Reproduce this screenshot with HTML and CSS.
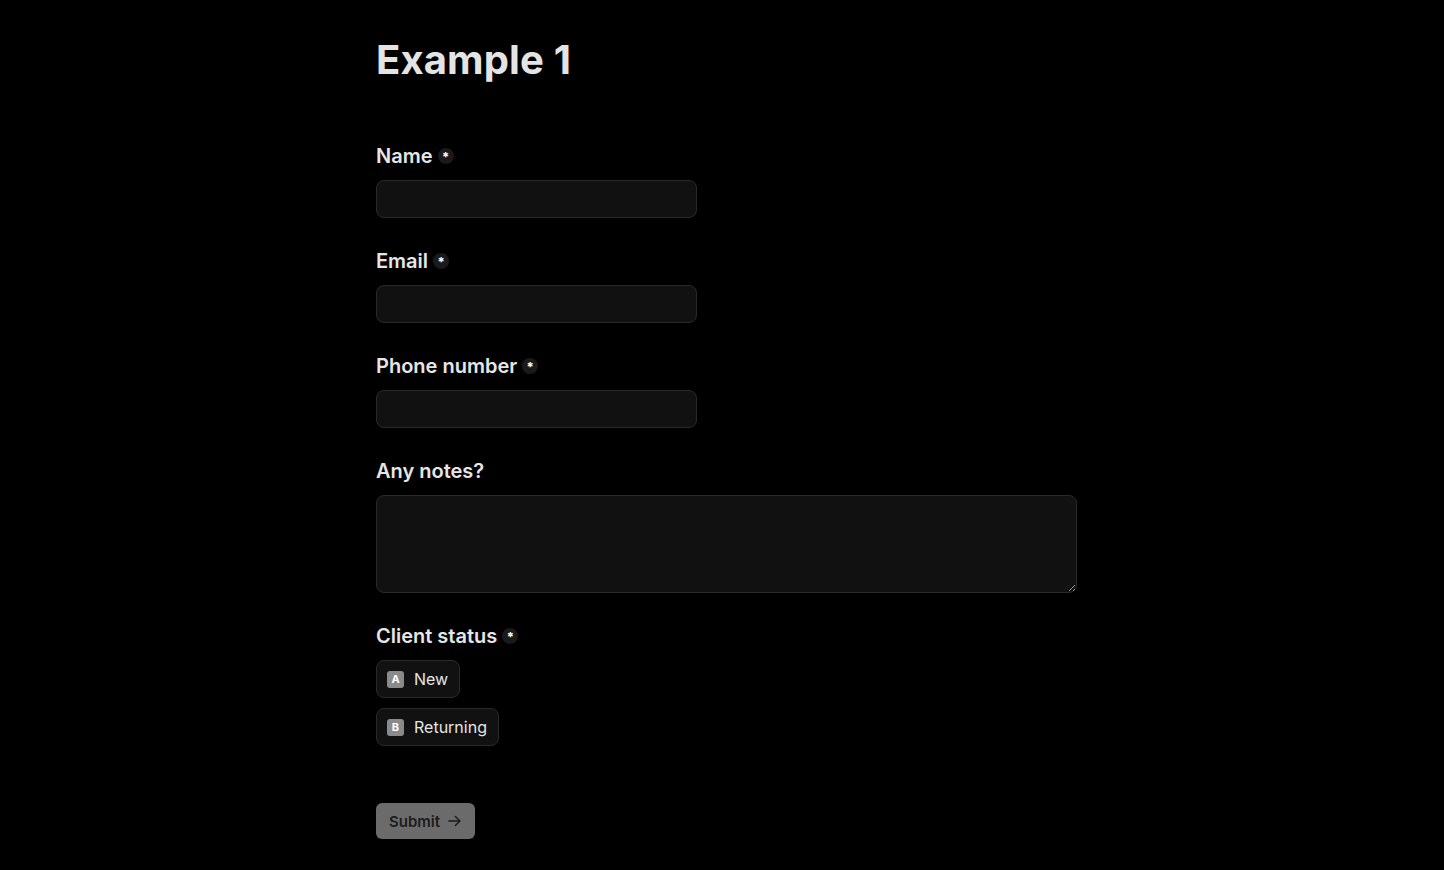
FILE: index.html
```html
<!DOCTYPE html>
<html lang="en">
<head>
<meta charset="utf-8">
<title>Example 1</title>
<link rel="stylesheet" href="styles.css">
</head>
<body>
<main class="page">
  <h1 class="title">Example 1</h1>
  <form class="form">
    <div class="field">
      <label class="label">Name <span class="req">*</span></label>
      <input class="input" type="text">
    </div>
    <div class="field">
      <label class="label">Email <span class="req">*</span></label>
      <input class="input" type="text">
    </div>
    <div class="field">
      <label class="label">Phone number <span class="req">*</span></label>
      <input class="input" type="text">
    </div>
    <div class="field">
      <label class="label">Any notes?</label>
      <textarea class="textarea"></textarea>
    </div>
    <div class="field">
      <label class="label">Client status <span class="req">*</span></label>
      <div class="options">
        <div class="option"><span class="key">A</span><span>New</span></div>
        <div class="option"><span class="key">B</span><span>Returning</span></div>
      </div>
    </div>
    <button class="submit" type="button">Submit
      <svg width="16" height="16" viewBox="0 0 16 16" fill="none" stroke="currentColor" stroke-width="1.6" stroke-linecap="round" stroke-linejoin="round"><path d="M2 8h12M9 3.2L13.8 8 9 12.8"/></svg>
    </button>
  </form>
</main>
</body>
</html>
```
FILE: styles.css
```css
* { box-sizing: border-box; }
html, body {
  margin: 0;
  background: #000;
  color: #e6e6e6;
  font-family: Inter, "Noto Sans", sans-serif;
}
.page {
  padding: 36px 0 0 376px;
  min-height: 870px;
}
.title {
  margin: 0;
  font-size: 40px;
  line-height: 48px;
  font-weight: 700;
  letter-spacing: 0.15px;
  color: #e4e4e4;
}
.form {
  margin-top: 58px;
  display: flex;
  flex-direction: column;
  align-items: flex-start;
  gap: 29px;
}
.field {
  display: flex;
  flex-direction: column;
  gap: 10px;
}
.label {
  display: flex;
  align-items: center;
  gap: 5px;
  font-size: 20px;
  line-height: 28px;
  font-weight: 600;
  color: #e6e6e6;
}
.req {
  display: block;
  width: 16px;
  height: 16px;
  padding-top: 3px;
  border-radius: 50%;
  background: #1a1a1a;
  color: #fff;
  font-size: 13px;
  line-height: 13px;
  font-weight: 700;
  text-align: center;
}
.input {
  width: 321px;
  height: 38px;
  background: #111;
  border: 1px solid #2a2a2a;
  border-radius: 8px;
  color: #eee;
  font: inherit;
  padding: 0 12px;
}
.textarea {
  width: 701px;
  height: 98px;
  background: #111;
  border: 1px solid #2a2a2a;
  border-radius: 8px;
  color: #eee;
  font: inherit;
  padding: 10px 12px;
  margin: 0;
  display: block;
}
.options {
  display: flex;
  flex-direction: column;
  align-items: flex-start;
  gap: 10px;
}
.option {
  height: 38px;
  display: flex;
  align-items: center;
  gap: 10px;
  padding: 0 11px 0 10px;
  background: #111;
  border: 1px solid #2a2a2a;
  border-radius: 8px;
  font-size: 16px;
  color: #e6e6e6;
}
.key {
  width: 17px;
  height: 17px;
  border-radius: 3px;
  background: #8a8a8a;
  color: #fff;
  font-size: 11px;
  font-weight: 700;
  display: flex;
  align-items: center;
  justify-content: center;
}
.submit {
  margin-top: 28px;
  height: 36px;
  width: 99px;
  display: flex;
  align-items: center;
  gap: 7px;
  padding: 0 13px;
  background: #6b6b6b;
  color: #1c1c1c;
  border: none;
  border-radius: 6px;
  font-family: inherit;
  font-size: 15px;
  font-weight: 600;
}
```
